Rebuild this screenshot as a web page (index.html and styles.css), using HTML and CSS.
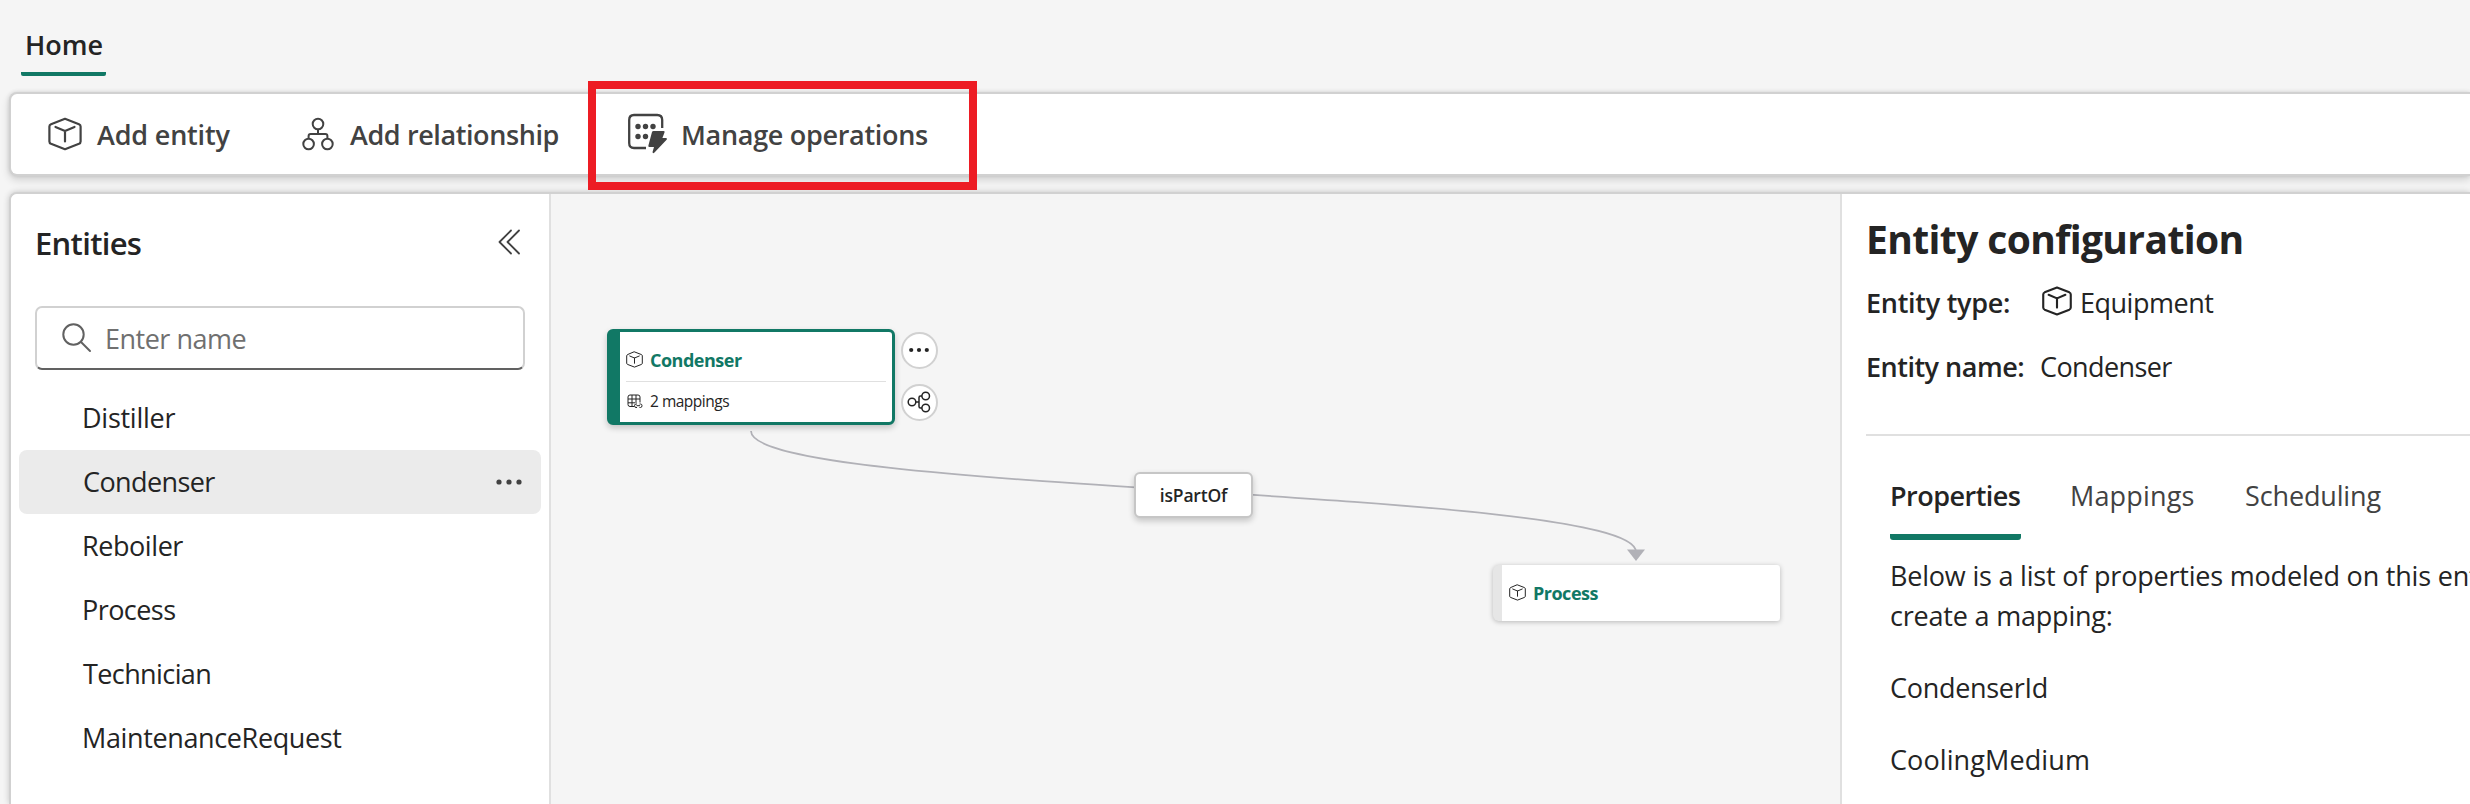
FILE: index.html
```html
<!DOCTYPE html>
<html lang="en">
<head>
<meta charset="utf-8">
<title>Home</title>
<link rel="stylesheet" href="styles.css">
</head>
<body>
<svg class="defs" width="0" height="0">
  <symbol id="cube" viewBox="0 0 34 34">
    <path d="M17 1.8 L31 7.2 Q32.6 7.9 32.6 9.6 V24.4 Q32.6 26.1 31 26.8 L17 32.2 L3 26.8 Q1.400 26.1 1.400 24.400 V9.600 Q1.400 7.900 3 7.200 Z M7.500 10 L17 14 L26.500 10 M17 14 V24.500" fill="none" stroke="currentColor" stroke-linecap="round" stroke-linejoin="round"/>
  </symbol>
</svg>
<nav class="tabbar"><a class="home">Home</a></nav>

<header class="toolbar">
  <button class="tool tool-entity"><svg class="cube-lg"><use href="#cube"/></svg><span class="ls-entity">Add entity</span></button>
  <button class="tool tool-relation">
    <svg width="32" height="34" viewBox="0 0 32 34" fill="none" stroke="currentColor" stroke-width="2"><circle cx="16" cy="7" r="5.300"/><circle cx="6.600" cy="27" r="5.300"/><circle cx="25.400" cy="27" r="5.300"/><path d="M16 12.500V17M6.600 21.500V19Q6.600 17 8.600 17H23.400Q25.400 17 25.400 19V21.500"/></svg>
    <span class="ls-relation">Add relationship</span>
  </button>
  <button class="tool tool-manage">
    <svg width="40" height="42" viewBox="0 0 40 42"><path d="M34.200 15V7Q34.200 2 29.200 2H6Q1.200 2 1.200 7V30Q1.200 35 6 35H18" fill="none" stroke="currentColor" stroke-width="2.300"/><g fill="currentColor"><circle cx="10" cy="13.500" r="2.700"/><circle cx="17.500" cy="13.500" r="2.700"/><circle cx="25" cy="13.500" r="2.700"/><circle cx="10" cy="23.500" r="2.700"/><circle cx="17.500" cy="23.500" r="2.700"/><path d="M25.500 18H35.500Q37 18 36.500 19.400L34.400 25H37.800Q39.800 25 38.600 26.700L26.500 39.600Q24.400 41.300 24.600 38.800L26 34H21.500Q20 34 20.400 32.500L24 19Q24.400 18 25.500 18Z"/></g></svg>
    <span class="ls-manage">Manage operations</span>
  </button>
</header>
<div class="callout"></div>

<main class="workspace">
  <aside class="sidebar">
    <div class="side-head"><h2>Entities</h2>
      <svg width="24" height="26" viewBox="0 0 24 26" fill="none" stroke="#424242" stroke-width="1.800" stroke-linecap="round" stroke-linejoin="round"><path d="M13 1.500L1.500 13L13 24.500M21 1.500L9.500 13L21 24.500"/></svg>
    </div>
    <label class="search">
      <svg width="30" height="30" viewBox="0 0 30 30" fill="none" stroke="#616161" stroke-width="2" stroke-linecap="round"><circle cx="11.500" cy="11.500" r="10.200"/><path d="M19 19L28 28"/></svg>
      <span>Enter name</span>
    </label>
    <ul class="entities">
      <li class="distiller">Distiller</li>
      <li class="condenser selected"><span>Condenser</span><svg width="28" height="8" viewBox="0 0 28 8" fill="#424242"><circle cx="4" cy="4" r="2.600"/><circle cx="14" cy="4" r="2.600"/><circle cx="24" cy="4" r="2.600"/></svg></li>
      <li class="reboiler">Reboiler</li>
      <li class="process">Process</li>
      <li class="technician">Technician</li>
      <li class="request">MaintenanceRequest</li>
    </ul>
  </aside>

  <section class="canvas">
    <svg class="edges" width="1289" height="610" viewBox="551 194 1289 610"><path d="M751 431C751 495 1636 487 1636 552" fill="none" stroke="#b1b1b7" stroke-width="1.700"/><path d="M1627 549.500H1645L1636 561Z" fill="#b1b1b7"/></svg>
    <div class="edge-label">isPartOf</div>
    <article class="node node-main">
      <div class="node-title"><svg class="cube-sm"><use href="#cube"/></svg><b>Condenser</b></div>
      <div class="node-maps">
        <svg width="16" height="15" viewBox="0 0 16 15" fill="none" stroke="#242424"><path d="M13 8.500V3Q13 1 11 1H3Q1 1 1 3V10.500Q1 12.500 3 12.500H7M1 5H13M1 8.800H8M5 1V12.500M9 1V9"/><path d="M10 10H9Q7.500 10 7.500 11.700Q7.500 13.500 9 13.500H10M12.500 10H13.500Q15 10 15 11.700Q15 13.500 13.500 13.500H12.500M9.500 11.700H13"/></svg>
        <span>2 mappings</span>
      </div>
    </article>
    <button class="round round-more"><svg width="22" height="6" viewBox="0 0 22 6" fill="#242424"><circle cx="3.200" cy="3" r="2.100"/><circle cx="11" cy="3" r="2.100"/><circle cx="18.800" cy="3" r="2.100"/></svg></button>
    <button class="round round-share"><svg width="24" height="22" viewBox="0 0 24 22" fill="none" stroke="#242424" stroke-width="1.500"><circle cx="5" cy="11" r="3.800"/><circle cx="18.700" cy="5" r="3.800"/><circle cx="18.700" cy="17" r="3.800"/><path d="M8.800 11H12M15 5H13.500Q12 5 12 6.500V15.500Q12 17 13.500 17H15"/></svg></button>
    <article class="node node-process"><svg class="cube-sm"><use href="#cube"/></svg><b>Process</b></article>
  </section>

  <aside class="config">
    <h1>Entity configuration</h1>
    <dl>
      <dt class="ls-type">Entity type:</dt><dd class="ls-equip"><svg class="cube-md"><use href="#cube"/></svg>Equipment</dd>
      <dt class="ls-name">Entity name:</dt><dd class="condenser config-name">Condenser</dd>
    </dl>
    <div class="tabs"><a class="tab-active">Properties</a><a class="tab-map">Mappings</a><a class="tab-sched">Scheduling</a></div>
    <div class="props">
      <p class="intro">Below is a list of properties modeled on this entity<br><span>create a mapping:</span></p>
      <p class="cond-id">CondenserId</p>
      <p class="cooling">CoolingMedium</p>
    </div>
  </aside>
</main>
</body>
</html>
```
FILE: styles.css
```css
*{box-sizing:border-box}
body{margin:0;width:2470px;height:804px;overflow:hidden;position:relative;display:flex;flex-direction:column;background:#f5f5f5;font:27px/40px "Open Sans","Noto Sans",sans-serif;color:#242424}
svg{display:block;flex:none}
.defs{position:absolute}
button{font:inherit;color:inherit;border:0;background:none;padding:0}
h1,h2,p,ul,dl,dd{margin:0;padding:0}
ul{list-style:none}

.tabbar{height:92px;flex:none;padding-left:21px;display:flex}
.home{width:85px;height:76px;padding:25px 0 0 4px;font-weight:600;border-radius:2px;background:linear-gradient(#117865,#117865) 0 100%/100% 4px no-repeat}

.toolbar{height:84px;flex:none;margin:0 0 16px 9px;border:2px solid #d1d1d1;border-right:0;border-radius:8px 0 0 8px;background:#fff;display:flex;align-items:center;color:#424242;font-weight:600;box-shadow:0 4px 8px rgba(0,0,0,.14),0 0 4px rgba(0,0,0,.12)}
.tool{display:flex;align-items:center;white-space:nowrap}
.tool span{padding-top:1px}
.tool-entity{width:255px;padding-left:37px;gap:15px}
.tool-relation{width:325px;padding-left:36px;gap:16px}
.tool-manage{padding-left:37px;gap:13px}
.cube-lg{width:34px;height:34px;stroke-width:2.200}
.ls-entity{letter-spacing:-.18px}
.ls-relation{letter-spacing:-.4px}
.ls-manage{letter-spacing:-.3px}
.callout{position:absolute;left:588px;top:81px;width:389px;height:109px;border:8px solid #ed1c24;z-index:2}

.workspace{height:612px;margin-left:9px;border:2px solid #d1d1d1;border-width:2px 0 0 2px;border-radius:8px 0 0 0;display:grid;grid-template-columns:540px 1289px 630px;background:#f5f5f5;overflow:hidden;box-shadow:0 0 6px rgba(0,0,0,.2)}
.sidebar{background:#fff;border-right:2px solid #e0e0e0}
.side-head{display:flex;justify-content:space-between;align-items:center;padding:29px 27px 0 24px;height:69px}
.side-head svg{margin-top:-3px}
h2{font-size:31px;line-height:40px;letter-spacing:-.69px;font-weight:600}
.search{margin:43px 0 0 24px;width:490px;height:64px;border:2px solid #d1d1d1;border-bottom-color:#616161;border-radius:7px;display:flex;align-items:center;gap:13px;padding-left:25px;color:#707070;letter-spacing:-.5px}
.search span{padding-top:1px}
.entities{margin:16px 8px 0}
.entities li{height:64px;padding:0 17px 0 63px;display:flex;align-items:center;justify-content:space-between;border-radius:8px}
.entities .condenser{padding-left:64px;padding-right:18px}
.entities .technician{padding-left:64px}
.entities .selected{background:#ebebeb}
.distiller{letter-spacing:-.26px}
.condenser{letter-spacing:-.6px}
.reboiler{letter-spacing:-.43px}
.process{letter-spacing:-.55px}
.technician{letter-spacing:-.6px}
.request{letter-spacing:-.37px}

/* free canvas: nodes sit at their own coordinates */
.canvas{position:relative}
.edges{position:absolute;left:0;top:0}
.node,.edge-label,.round{position:absolute;background:#fff}
.node b{font-size:18px;letter-spacing:-.5px;color:#117865}
.cube-sm{width:17px;height:17px;stroke-width:2;color:#242424}
.node-main{left:56px;top:135px;width:288px;height:96px;border:3px solid #117865;border-left-width:13px;border-radius:6px;box-shadow:0 3px 6px rgba(0,0,0,.2);padding:0 6px}
.node-title{height:50px;padding-top:10px;display:flex;align-items:center;gap:7px;border-bottom:1.500px solid #e0e0e0}
.node-title svg{margin:-5px 0 0 0}
.node-title b{line-height:30px;margin-top:-4px}
.node-maps{display:flex;align-items:center;gap:7px;padding-left:1px;font-size:15.500px;letter-spacing:-.5px;height:38px}
.edge-label{left:583px;top:278px;width:119px;height:46px;border:2px solid #c6c6c6;border-radius:6px;font-size:17.500px;font-weight:600;letter-spacing:-.2px;line-height:43px;text-align:center;box-shadow:0 3px 6px rgba(0,0,0,.2)}
.round{width:37px;height:37px;border:2px solid #d1d1d1;border-radius:50%;display:flex;align-items:center;justify-content:center}
.round-more{left:349.500px;top:137.500px}
.round-share{left:349.500px;top:189.500px}
.node-process{left:942px;top:371px;width:287px;height:56px;border-left:9px solid #e6e6e6;border-radius:6px 3px 3px 6px;display:flex;align-items:center;gap:7px;padding-left:7px;box-shadow:0 1px 5px rgba(0,0,0,.25)}
.node-process svg{margin-bottom:2px}
.node-process b{margin-top:-1px}

.config{background:#fff;border-left:2px solid #e0e0e0;white-space:nowrap;overflow:hidden;padding-left:24px}
h1{font-size:39px;line-height:50px;padding-top:20px;letter-spacing:-.62px;font-weight:700}
dl{display:grid;grid-template-columns:173px 1fr;grid-auto-rows:64px;align-items:center;padding-top:7px;height:172px;border-bottom:2px solid #e0e0e0}
dt{font-weight:600}
dd{display:flex;align-items:center}
.config-name{padding-left:1px}
.cube-md{width:30px;height:30px;stroke-width:2.400;margin:0 8px 4px 3px}
.ls-type{letter-spacing:-.27px}
.ls-name{letter-spacing:-.5px}
.ls-equip{letter-spacing:-.49px}
.tabs{display:flex;height:104px;padding:40px 0 0 24px;color:#424242}
.tab-active{width:131px;margin-right:49px;font-weight:600;letter-spacing:-.52px;color:#242424;border-radius:3px;background:linear-gradient(#117865,#117865) 0 100%/100% 6px no-repeat}
.tab-map{width:175px;letter-spacing:.16px}
.tab-sched{letter-spacing:-.14px}
.props{padding:16px 0 0 24px}
.intro{letter-spacing:-.2px;margin-bottom:32px}
.cond-id{letter-spacing:-.3px;margin-bottom:32px}
.cooling{letter-spacing:.1px}
```
